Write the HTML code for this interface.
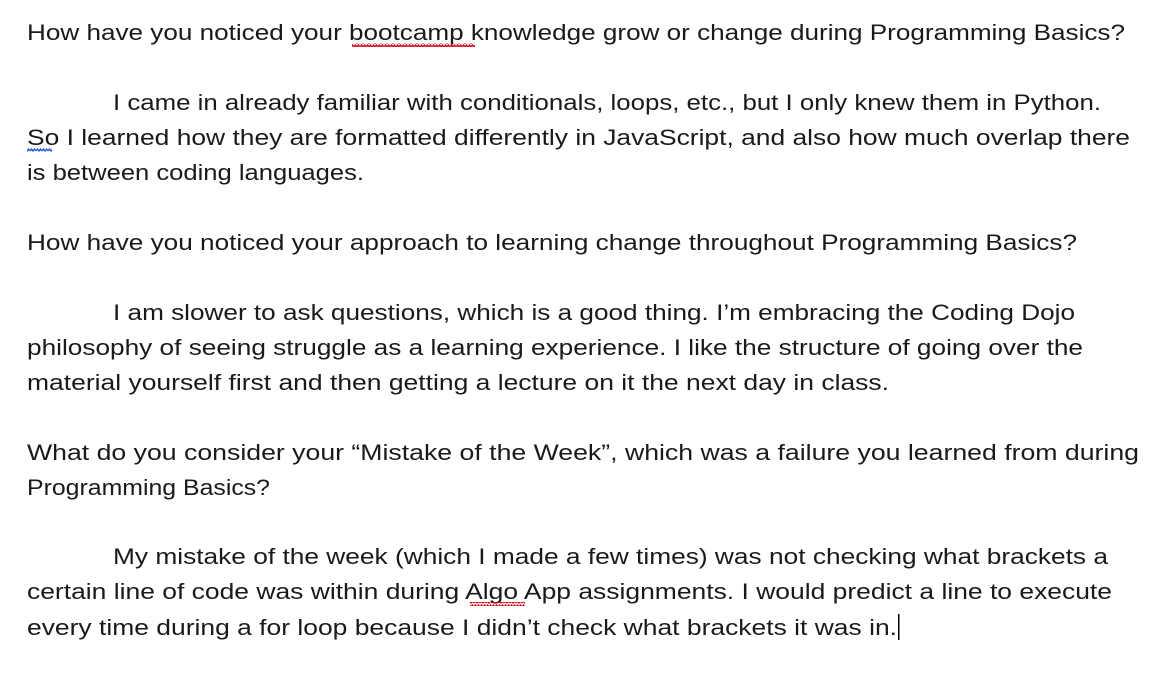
<!DOCTYPE html>
<html><head><meta charset="utf-8"><style>
html,body{margin:0;padding:0;background:#fff;width:1174px;height:678px;overflow:hidden}
text{font-family:"Liberation Sans",sans-serif;font-size:22px;fill:#1a1a1a}
</style></head><body>
<svg width="1174" height="678" xmlns="http://www.w3.org/2000/svg">
<defs>
<pattern id="sq" width="6" height="4" patternUnits="userSpaceOnUse"><path d="M0 3 L1.5 1 L3 3 L4.5 1 L6 3" stroke="#d0021b" stroke-width="1.4" fill="none"/></pattern>
<pattern id="sqb" width="6" height="4" patternUnits="userSpaceOnUse"><path d="M0 3 L1.5 1 L3 3 L4.5 1 L6 3" stroke="#2a5bd7" stroke-width="1.4" fill="none"/></pattern>
</defs>
<text x="27" y="40" textLength="1098" lengthAdjust="spacingAndGlyphs">How have you noticed your bootcamp knowledge grow or change during Programming Basics?</text>
<text x="113" y="110" textLength="988" lengthAdjust="spacingAndGlyphs">I came in already familiar with conditionals, loops, etc., but I only knew them in Python.</text>
<text x="27" y="145" textLength="1103" lengthAdjust="spacingAndGlyphs">So I learned how they are formatted differently in JavaScript, and also how much overlap there</text>
<text x="27" y="180" textLength="337" lengthAdjust="spacingAndGlyphs">is between coding languages.</text>
<text x="27" y="250" textLength="1050" lengthAdjust="spacingAndGlyphs">How have you noticed your approach to learning change throughout Programming Basics?</text>
<text x="113" y="320" textLength="962" lengthAdjust="spacingAndGlyphs">I am slower to ask questions, which is a good thing. I’m embracing the Coding Dojo</text>
<text x="27" y="355" textLength="1056" lengthAdjust="spacingAndGlyphs">philosophy of seeing struggle as a learning experience. I like the structure of going over the</text>
<text x="27" y="390" textLength="862" lengthAdjust="spacingAndGlyphs">material yourself first and then getting a lecture on it the next day in class.</text>
<text x="27" y="460" textLength="1112" lengthAdjust="spacingAndGlyphs">What do you consider your “Mistake of the Week”, which was a failure you learned from during</text>
<text x="27" y="495" textLength="243" lengthAdjust="spacingAndGlyphs">Programming Basics?</text>
<text x="113" y="564" textLength="995" lengthAdjust="spacingAndGlyphs">My mistake of the week (which I made a few times) was not checking what brackets a</text>
<text x="27" y="599" textLength="1085" lengthAdjust="spacingAndGlyphs">certain line of code was within during Algo App assignments. I would predict a line to execute</text>
<text x="27" y="635" textLength="870" lengthAdjust="spacingAndGlyphs">every time during a for loop because I didn’t check what brackets it was in.</text>
<rect x="898" y="614" width="1.5" height="26" fill="#000"/>
<rect x="352" y="43" width="123" height="4" fill="url(#sq)"/>
<rect x="27" y="148" width="25" height="4" fill="url(#sqb)"/>
<rect x="470" y="602" width="55" height="4" fill="url(#sq)"/>
</svg>
</body></html>
